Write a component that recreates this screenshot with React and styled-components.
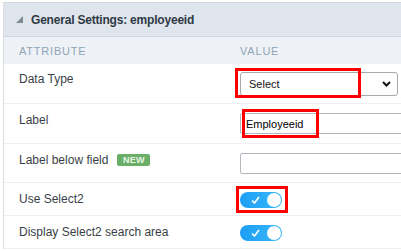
import React from "react";
import styled, { createGlobalStyle } from "styled-components";

const GlobalStyle = createGlobalStyle`
  html, body { margin: 0; padding: 0; background: #ffffff; overflow: hidden; }
  body { font-family: "Liberation Sans", Arial, sans-serif; }
  * { box-sizing: border-box; }
`;

const Page = styled.div`
  padding: 2px 0 0 3px;
  width: 401px;
  height: 251px;
  overflow: hidden;
`;

const Panel = styled.div`
  width: 440px;
  border-left: 1px solid #d8dde3;
  border-top: 1px solid #cfd6dd;
`;

const Header = styled.div`
  height: 34px;
  display: flex;
  align-items: center;
  gap: 8px;
  padding-left: 12px;
  background: #dfe5ec;
  border-bottom: 1px solid #cdd6df;
`;

const Title = styled.span`
  font-size: 12px;
  font-weight: bold;
  letter-spacing: -0.2px;
  color: #2f3a45;
  line-height: 16px;
`;

const ColumnHeads = styled.div`
  display: grid;
  grid-template-columns: 236px 1fr;
  align-items: center;
  height: 27px;
  background: #eef2f6;
`;

const ColumnHead = styled.span`
  font-size: 11px;
  letter-spacing: 0.8px;
  text-transform: uppercase;
  color: #8ea5b6;
  padding-left: ${(p) => p.$pad || 0}px;
`;

const Row = styled.div`
  display: grid;
  grid-template-columns: 236px 1fr;
  align-items: start;
  height: ${(p) => p.$h}px;
  padding-top: ${(p) => p.$pad}px;
  border-bottom: 1px solid #eceff3;
`;

const Label = styled.div`
  display: flex;
  align-items: center;
  gap: 9px;
  padding-left: 15px;
  font-size: 12px;
  line-height: 16px;
  color: #3a3f47;
`;

const Badge = styled.span`
  display: inline-flex;
  align-items: center;
  justify-content: center;
  width: 33px;
  height: 12px;
  background: #6aae68;
  border-radius: 2px;
  color: #e9f6e6;
  font-size: 9px;
  font-weight: bold;
  letter-spacing: 0.3px;
`;

const Control = styled.div`
  position: relative;
  margin-top: 1px;
  display: flex;
`;

const SelectBox = styled.div`
  width: 158px;
  height: 24px;
  display: flex;
  align-items: center;
  justify-content: space-between;
  padding: 0 6px 0 8px;
  border: 1px solid #a7a9ad;
  border-radius: 3px;
  background: #fff;
  font-size: 11px;
  color: #111;
`;

const TextInput = styled.div`
  width: 200px;
  height: 21px;
  display: flex;
  align-items: center;
  padding-left: 5px;
  border: 1px solid #b3b8bf;
  border-radius: 2px;
  background: #fff;
  font-size: 11px;
  color: #000;
`;

const Toggle = styled.div`
  position: relative;
  width: 42px;
  height: 16px;
  border-radius: 8px;
  background: linear-gradient(90deg, #1c9ef3, #3bb8fb);
  display: flex;
  align-items: center;
  padding-left: 11px;
`;

const Knob = styled.span`
  position: absolute;
  right: 1px;
  top: 1px;
  width: 14px;
  height: 14px;
  border-radius: 50%;
  background: #ffffff;
`;

const Highlight = styled.div`
  position: absolute;
  left: ${(p) => p.$x}px;
  top: ${(p) => p.$y}px;
  width: ${(p) => p.$w}px;
  height: ${(p) => p.$hh}px;
  border: 3px solid #ff0000;
  pointer-events: none;
`;

const Triangle = () => (
  <svg width="7" height="7" viewBox="0 0 7 7">
    <polygon points="7,0 7,7 0,7" fill="#7f8a93" />
  </svg>
);

const Chevron = () => (
  <svg width="9" height="6" viewBox="0 0 9 6">
    <polyline points="1,1 4.5,4.5 8,1" fill="none" stroke="#111" strokeWidth="2" />
  </svg>
);

const Check = () => (
  <svg width="9" height="8" viewBox="0 0 9 8">
    <polyline points="1,4.5 3.5,7 8,1" fill="none" stroke="#fff" strokeWidth="1.6" />
  </svg>
);

const Switch = () => (
  <Toggle>
    <Check />
    <Knob />
  </Toggle>
);

export default function App() {
  return (
    <>
      <GlobalStyle />
      <Page>
        <Panel>
          <Header>
            <Triangle />
            <Title>General Settings: employeeid</Title>
          </Header>
          <ColumnHeads>
            <ColumnHead $pad={15}>Attribute</ColumnHead>
            <ColumnHead>Value</ColumnHead>
          </ColumnHeads>

          <Row $h={40} $pad={7}>
            <Label>Data Type</Label>
            <Control>
              <SelectBox>
                <span>Select</span>
                <Chevron />
              </SelectBox>
              <Highlight $x={-5} $y={-4} $w={126} $hh={30} />
            </Control>
          </Row>

          <Row $h={40} $pad={8}>
            <Label>Label</Label>
            <Control>
              <TextInput>Employeeid</TextInput>
              <Highlight $x={2} $y={-4} $w={77} $hh={29} />
            </Control>
          </Row>

          <Row $h={39} $pad={8}>
            <Label>
              Label below field <Badge>NEW</Badge>
            </Label>
            <Control>
              <TextInput />
            </Control>
          </Row>

          <Row $h={33} $pad={8}>
            <Label>Use Select2</Label>
            <Control>
              <Switch />
              <Highlight $x={-4} $y={-6} $w={52} $hh={27} />
            </Control>
          </Row>

          <Row $h={33} $pad={8}>
            <Label>Display Select2 search area</Label>
            <Control>
              <Switch />
            </Control>
          </Row>
        </Panel>
      </Page>
    </>
  );
}
